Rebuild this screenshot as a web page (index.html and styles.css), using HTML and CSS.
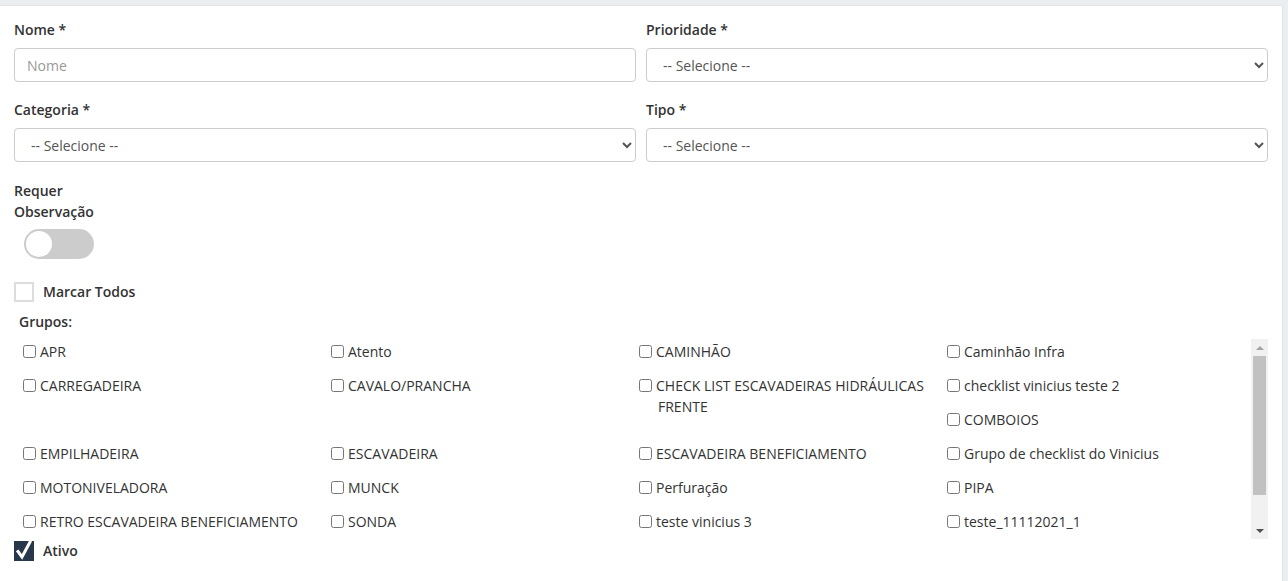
FILE: index.html
```html
<!DOCTYPE html>
<html lang="pt-BR">
<head>
    <meta charset="UTF-8">
    <meta name="viewport" content="width=device-width, initial-scale=1.0">
    <title>Cadastro de Item de Checklist</title>
    <link rel="stylesheet" href="styles.css">
</head>
<body>
    <div class="page">
        <div class="card">
            <!-- Campos principais -->
            <div class="form-row">
                <div class="form-group">
                    <label class="field-label" for="nome">Nome *</label>
                    <input id="nome" class="form-control" type="text" placeholder="Nome">
                </div>
                <div class="form-group">
                    <label class="field-label" for="prioridade">Prioridade *</label>
                    <select id="prioridade" class="form-control">
                        <option>-- Selecione --</option>
                    </select>
                </div>
                <div class="form-group">
                    <label class="field-label" for="categoria">Categoria *</label>
                    <select id="categoria" class="form-control">
                        <option>-- Selecione --</option>
                    </select>
                </div>
                <div class="form-group">
                    <label class="field-label" for="tipo">Tipo *</label>
                    <select id="tipo" class="form-control">
                        <option>-- Selecione --</option>
                    </select>
                </div>
            </div>

            <!-- Requer observação -->
            <div class="obs-group">
                <label class="field-label obs-label">Requer Observação</label>
                <div class="toggle"><span class="toggle-knob"></span></div>
            </div>

            <!-- Marcar todos -->
            <label class="check-row">
                <span class="check-box"></span>
                <span class="check-text">Marcar Todos</span>
            </label>

            <div class="grupos-title">Grupos:</div>
            <div class="grupos-box">
                <div class="grupos-list">
                    <label class="grupo-item"><input type="checkbox">APR</label>
                    <label class="grupo-item"><input type="checkbox">Atento</label>
                    <label class="grupo-item"><input type="checkbox">CAMINHÃO</label>
                    <label class="grupo-item"><input type="checkbox">Caminhão Infra</label>
                    <label class="grupo-item"><input type="checkbox">CARREGADEIRA</label>
                    <label class="grupo-item"><input type="checkbox">CAVALO/PRANCHA</label>
                    <label class="grupo-item"><input type="checkbox">CHECK LIST ESCAVADEIRAS HIDRÁULICAS FRENTE</label>
                    <label class="grupo-item"><input type="checkbox">checklist vinicius teste 2</label>
                    <label class="grupo-item"><input type="checkbox">COMBOIOS</label>
                    <label class="grupo-item"><input type="checkbox">EMPILHADEIRA</label>
                    <label class="grupo-item"><input type="checkbox">ESCAVADEIRA</label>
                    <label class="grupo-item"><input type="checkbox">ESCAVADEIRA BENEFICIAMENTO</label>
                    <label class="grupo-item"><input type="checkbox">Grupo de checklist do Vinicius</label>
                    <label class="grupo-item"><input type="checkbox">MOTONIVELADORA</label>
                    <label class="grupo-item"><input type="checkbox">MUNCK</label>
                    <label class="grupo-item"><input type="checkbox">Perfuração</label>
                    <label class="grupo-item"><input type="checkbox">PIPA</label>
                    <label class="grupo-item"><input type="checkbox">RETRO ESCAVADEIRA BENEFICIAMENTO</label>
                    <label class="grupo-item"><input type="checkbox">SONDA</label>
                    <label class="grupo-item"><input type="checkbox">teste vinicius 3</label>
                    <label class="grupo-item"><input type="checkbox">teste_11112021_1</label>
                </div>
                <!-- barra de rolagem -->
                <div class="scrollbar">
                    <span class="scroll-btn"><span class="arrow-up"></span></span>
                    <div class="scroll-track"><div class="scroll-thumb"></div></div>
                    <span class="scroll-btn"><span class="arrow-down"></span></span>
                </div>
            </div>

            <!-- Ativo -->
            <label class="check-row ativo-row">
                <span class="check-box checked">
                    <svg width="22" height="24" viewBox="0 0 22 24"><path d="M5 13.5 L9 19 L17 4" fill="none" stroke="#fff" stroke-width="3" stroke-linecap="square"/></svg>
                </span>
                <span class="check-text">Ativo</span>
            </label>
        </div>
    </div>
</body>
</html>
```

FILE: styles.css
```css
/* base */
body {
    margin: 0;
    background-color: #ebeef0;
    font-family: 'Open Sans', 'Liberation Sans', sans-serif;
    font-size: 14px;
    color: #333;
    overflow: hidden;
}

.page {
    padding: 5px 5px 0 0;
}

.card {
    background-color: #fff;
    border-top: 1px solid #e2e5e8;
    border-right: 1px solid #e2e5e8;
    padding: 14px 14px 40px 14px;
}

/* formulário */
.form-row {
    display: grid;
    grid-template-columns: 1fr 1fr;
    column-gap: 10px;
}

.form-group {
    margin-bottom: 18px;
}

.field-label {
    display: block;
    font-weight: 600;
    line-height: 20px;
    margin-bottom: 8px;
}

.form-control {
    display: block;
    width: 100%;
    height: 34px;
    box-sizing: border-box;
    padding: 6px 12px;
    border: 1px solid #ccc;
    border-radius: 4px;
    background-color: #fff;
    font-family: inherit;
    font-size: 14px;
    color: #555;
}

.form-control::placeholder {
    color: #999;
}

/* requer observação */
.obs-label {
    width: 90px;
    line-height: 21px;
    margin-bottom: 7px;
}

.toggle {
    width: 70px;
    height: 30px;
    margin-left: 10px;
    border-radius: 15px;
    background-color: #ccc;
    display: flex;
    align-items: center;
    padding: 0 2px;
    box-sizing: border-box;
}

.toggle-knob {
    width: 26px;
    height: 26px;
    border-radius: 50%;
    background-color: #fff;
}

/* checkbox customizado */
.check-row {
    display: flex;
    align-items: center;
    gap: 9px;
    margin-top: 23px;
    height: 20px;
}

.check-box {
    width: 20px;
    height: 20px;
    box-sizing: border-box;
    border: 2px solid #dcdcdc;
    background-color: #fff;
    position: relative;
}

.check-box.checked {
    border: none;
    background-color: #263849;
}

.check-box svg {
    position: absolute;
    left: -1px;
    top: -3px;
}

.check-text {
    font-weight: 600;
    line-height: 20px;
}

.ativo-row {
    margin-top: 2px;
}

/* grupos */
.grupos-title {
    font-weight: 600;
    line-height: 21px;
    margin: 9px 0 7px 5px;
}

.grupos-box {
    display: flex;
    margin-left: 5px;
    height: 200px;
}

.grupos-list {
    flex: 1;
    overflow: hidden;
}

.grupo-item {
    float: left;
    width: 25%;
    box-sizing: border-box;
    padding: 2px 0 11px 23px;
    text-indent: -23px;
    line-height: 21px;
}

.grupo-item input {
    margin: 0 4px 0 4px;
    width: 13px;
    height: 13px;
    vertical-align: -1px;
    text-indent: 0;
}

/* barra de rolagem */
.scrollbar {
    width: 17px;
    background-color: #f1f1f1;
    display: flex;
    flex-direction: column;
}

.scroll-btn {
    height: 17px;
    display: flex;
    justify-content: center;
    align-items: center;
}

.arrow-up {
    width: 0;
    height: 0;
    border-left: 4px solid transparent;
    border-right: 4px solid transparent;
    border-bottom: 4px solid #a3a3a3;
}

.arrow-down {
    width: 0;
    height: 0;
    border-left: 4px solid transparent;
    border-right: 4px solid transparent;
    border-top: 4px solid #505050;
}

.scroll-track {
    flex: 1;
    padding: 0 2px;
}

.scroll-thumb {
    height: 139px;
    background-color: #c1c1c1;
}
```
